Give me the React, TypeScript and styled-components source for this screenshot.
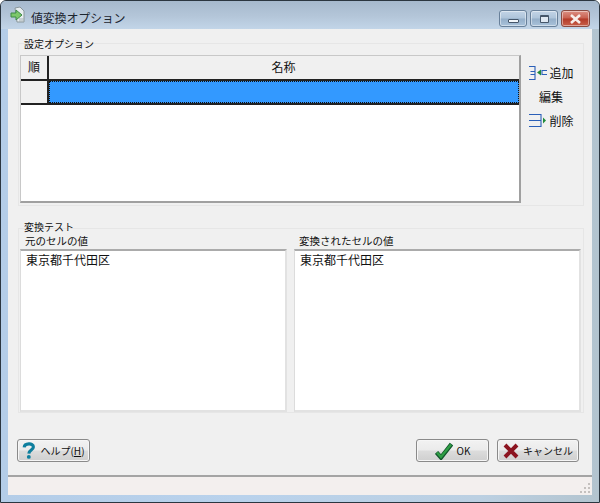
import React from 'react';
import styled, { createGlobalStyle } from 'styled-components';

const Global = createGlobalStyle`
  html, body { margin: 0; padding: 0; background: #fff; }
  * { box-sizing: border-box; }
`;
const Frame = styled.div`
  width: 600px; height: 503px; display: flex; flex-direction: column;
  border: 1px solid #2b3640; border-radius: 6px 6px 0 0; overflow: hidden;
  background: linear-gradient(90deg, #b4cde8 0%, #b9d2ec 40%, #bcd0e2 80%, #b3c4cf 100%);
  font: 12px "Noto Sans CJK JP", "Liberation Sans", sans-serif; color: #111;
`;
const TitleBar = styled.div`
  height: 28px; flex: none; display: flex; align-items: center; padding: 0 9px 0 9px;
  background: linear-gradient(180deg, #a6b9cd 0%, #b4c6d9 55%, #c2d5e8 100%);
`;
const TitleText = styled.div`
  flex: 1; margin-left: 4px; font-size: 12px; line-height: 16px; color: #1c2530; margin-top: 6px;
  letter-spacing: -0.2px;
`;
const WinButtons = styled.div`
  display: flex; gap: 3px; align-self: flex-start; margin-top: 9px;
`;
const WinButton = styled.div<{ $w: number; $close?: boolean }>`
  width: ${p => p.$w}px; height: 17px; border-radius: 3px; display: flex; align-items: center; justify-content: center;
  border: 1px solid ${p => (p.$close ? '#8a4a40' : '#68809a')};
  box-shadow: inset 0 0 0 1px rgba(255,255,255,.45);
  background: ${p => p.$close
    ? 'linear-gradient(180deg,#dc9184 0%,#c9604f 48%,#b33a28 52%,#c8604a 100%)'
    : 'linear-gradient(180deg,#c3d4e6 0%,#aec4da 48%,#94aec8 52%,#a9c2da 100%)'};
`;
const MinGlyph = styled.div`
  width: 11px; height: 4px; border: 1px solid #45566a; background: #f2f6fa; margin-top: 4px; border-radius: 1px;
`;
const MaxGlyph = styled.div`
  width: 9px; height: 8px; border: 1px solid #45566a; border-top-width: 2px; background: #dfe8f2; border-radius: 1px;
`;
const Client = styled.div`
  flex: 1; margin: 0 7px 7px 7px; display: flex; flex-direction: column; background: #f0f0f0;
  min-height: 0;
`;
const Body = styled.div`
  flex: 1; padding: 14px 8px 0 10px; display: flex; flex-direction: column; min-height: 0;
`;
const Group = styled.div<{ $h: number; $mt?: number }>`
  height: ${p => p.$h}px; flex: none; margin-top: ${p => p.$mt ?? 0}px;
  border: 1px solid #e6e6e6; display: flex; flex-direction: column; padding: 0 1px;
`;
const Legend = styled.div<{ $mt: number; $mb: number }>`
  font-size: 10px; line-height: 13px; height: 13px; margin: ${p => p.$mt}px 0 ${p => p.$mb}px 4px;
`;
const TopRow = styled.div`
  display: flex; flex: 1; min-height: 0;
`;
const Grid = styled.div`
  width: 501px; height: 148px; flex: none; background: #fff; display: flex; flex-direction: column;
  border: 1px solid #c8c8c8; border-right: 2px solid #a0a0a0; border-bottom: 2px solid #a0a0a0;
`;
const GridHead = styled.div`
  display: flex; height: 25px; flex: none; border-bottom: 2px solid #222; background: #f0f0f0;
`;
const HeadCell = styled.div<{ $num?: boolean }>`
  ${p => (p.$num ? 'width: 28px; border-right: 2px solid #222;' : 'flex: 1; margin-left: -1px;')}
  display: flex; align-items: center; justify-content: center; font-size: 12px; padding-bottom: 2px;
`;
const GridRow = styled.div`
  display: flex; height: 24px; flex: none; border-bottom: 2px solid #222;
`;
const RowHead = styled.div`
  width: 28px; background: #f0f0f0; border-right: 2px solid #222;
`;
const RowCell = styled.div`
  flex: 1; background: #3399ff; outline: 1px dotted #111; outline-offset: -1px;
`;
const Actions = styled.div`
  display: flex; flex-direction: column; margin: 8px 0 0 7px; gap: 5px;
`;
const Action = styled.div`
  height: 19px; width: 48px; display: flex; align-items: center; justify-content: center; gap: 1px;
  font-size: 12px; line-height: 19px; white-space: nowrap; margin-left: -1px;
`;
const Panels = styled.div`
  display: flex; gap: 7px; flex: 1; min-height: 0;
`;
const Column = styled.div<{ $w: number }>`
  width: ${p => p.$w}px; flex: none; display: flex; flex-direction: column;
`;
const Caption = styled.div`
  font-size: 10.5px; line-height: 13px; height: 15px; padding-left: 5px; margin-top: 1px;
`;
const TextBox = styled.div`
  flex: 1; background: #fff; padding: 0 5px; font-size: 12px; line-height: 17px;
  border-top: 2px solid #ababab; border-left: 1px solid #dcdcdc; border-right: 2px solid #e2e2e2; border-bottom: 2px solid #e2e2e2;
`;
const ButtonRow = styled.div`
  display: flex; margin-top: 26px;
`;
const Button = styled.div<{ $w: number; $ml?: number }>`
  width: ${p => p.$w}px; height: 23px; margin-left: ${p => p.$ml ?? 0}px;
  border: 1px solid #8a8a8a; border-radius: 3px; display: flex; align-items: center; justify-content: center; gap: 4px;
  font-size: 10px; white-space: nowrap; box-shadow: inset 0 0 0 1px #f6f6f6;
  background: linear-gradient(180deg, #f2f2f2 0%, #ebebeb 48%, #dcdcdc 52%, #cfcfcf 100%);
`;
const Key = styled.span`
  text-decoration: underline;
`;
const StatusBar = styled.div`
  height: 20px; flex: none; margin-top: 14px; border-top: 2px solid #a4a4a4; background: #f3efee;
  display: flex; justify-content: flex-end; align-items: flex-end; padding: 0 1px 1px 0;
`;

const AppIcon = () => (
  <svg width="17" height="18" viewBox="0 0 17 18">
    <path d="M5 2l5-1 4 4v11H7z" fill="#e8eef0" stroke="#8a979c" />
    <path d="M9 13h5M9 15h5" stroke="#a4b0b4" />
    <path d="M1 7h5V4l6 5-6 5v-3H1z" fill="#7cc86a" stroke="#3d8a48" />
  </svg>
);
const AddIcon = () => (
  <svg width="20" height="16" viewBox="0 0 20 16" fill="none">
    <path d="M1 1.5h6v5H2.5M7 6.5v3H2.5M7 9.5v5H1" stroke="#2a5fb8" strokeWidth="1.1" />
    <path d="M19 5.5h-5v4h5" stroke="#2a5fb8" strokeWidth="1.1" />
    <path d="M13 4.5v6l-4-3z" fill="#1f8a3a" />
  </svg>
);
const RemoveIcon = () => (
  <svg width="20" height="16" viewBox="0 0 20 16" fill="none">
    <path d="M1 1.5h12v12H1M1 7.5h12" stroke="#2a5fb8" strokeWidth="1.1" />
    <path d="M15 4.5v6l3-3z" fill="#1f8a3a" />
  </svg>
);
const HelpIcon = () => (
  <svg width="14" height="19" viewBox="0 0 16 20" fill="none">
    <path d="M2.5 6.5C3 1.5 13 1 13 6c0 3.5-5 3.5-5.2 7.5" stroke="#0f7f9e" strokeWidth="3.6" />
    <circle cx="7.8" cy="17.3" r="2.2" fill="#0f7f9e" />
  </svg>
);
const CheckIcon = () => (
  <svg width="18" height="18" viewBox="0 0 18 18" fill="none">
    <path d="M1.5 10.5l4.5 5L16.5 2" stroke="#12562c" strokeWidth="4.4" />
    <path d="M2 10.5l4 4.4L16 2.6" stroke="#2f9e45" strokeWidth="2.4" />
  </svg>
);
const CrossIcon = () => (
  <svg width="16" height="16" viewBox="0 0 16 16" fill="none">
    <path d="M2 2l12 12M14 2L2 14" stroke="#8c1420" strokeWidth="4" />
  </svg>
);
const Grip = () => (
  <svg width="12" height="12" viewBox="0 0 12 12" fill="#c4c0be">
    {[[9, 9], [5, 9], [1, 9], [9, 5], [5, 5], [9, 1]].map(([x, y]) => <rect key={`${x}-${y}`} x={x} y={y} width="2" height="2" />)}
  </svg>
);

export default function App() {
  return (
    <>
      <Global />
      <Frame>
        <TitleBar>
          <AppIcon />
          <TitleText>値変換オプション</TitleText>
          <WinButtons>
            <WinButton $w={28}><MinGlyph /></WinButton>
            <WinButton $w={28}><MaxGlyph /></WinButton>
            <WinButton $w={29} $close>
              <svg width="13" height="10" viewBox="0 0 13 10" fill="none">
                <path d="M2 1l9 8M11 1L2 9" stroke="#f6eeea" strokeWidth="2.6" />
              </svg>
            </WinButton>
          </WinButtons>
        </TitleBar>
        <Client>
          <Body>
            <Group $h={163}>
              <Legend $mt={-7} $mb={5}>設定オプション</Legend>
              <TopRow>
                <Grid>
                  <GridHead>
                    <HeadCell $num>順</HeadCell>
                    <HeadCell>名称</HeadCell>
                  </GridHead>
                  <GridRow>
                    <RowHead />
                    <RowCell />
                  </GridRow>
                </Grid>
                <Actions>
                  <Action><AddIcon />追加</Action>
                  <Action>編集</Action>
                  <Action><RemoveIcon />削除</Action>
                </Actions>
              </TopRow>
            </Group>
            <Group $h={185} $mt={22}>
              <Legend $mt={-9} $mb={0}>変換テスト</Legend>
              <Panels>
                <Column $w={267}>
                  <Caption>元のセルの値</Caption>
                  <TextBox>東京都千代田区</TextBox>
                </Column>
                <Column $w={287}>
                  <Caption>変換されたセルの値</Caption>
                  <TextBox>東京都千代田区</TextBox>
                </Column>
              </Panels>
            </Group>
            <ButtonRow>
              <Button $w={73} $ml={-1}><HelpIcon /><span>ヘルプ(<Key>H</Key>)</span></Button>
              <Button $w={73} $ml={326}><CheckIcon />OK</Button>
              <Button $w={82} $ml={8}><CrossIcon />キャンセル</Button>
            </ButtonRow>
          </Body>
          <StatusBar><Grip /></StatusBar>
        </Client>
      </Frame>
    </>
  );
}
